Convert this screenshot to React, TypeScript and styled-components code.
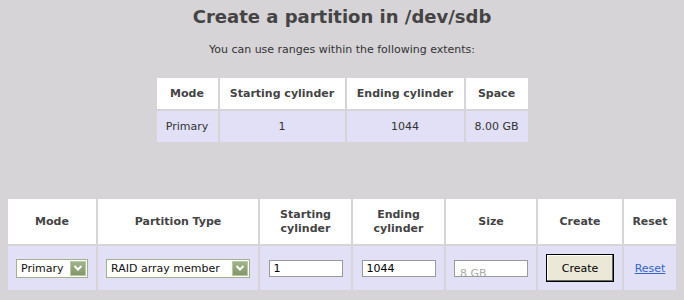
import React from 'react'
import styled, { createGlobalStyle } from 'styled-components'

const GlobalStyle = createGlobalStyle`
  html, body {
    margin: 0;
    padding: 0;
    background: #d6d4d7;
  }
  body {
    font-family: "DejaVu Sans", Verdana, sans-serif;
    font-size: 11px;
    color: #333;
  }
`

const Page = styled.div`
  padding: 0 6px;
`

const Title = styled.h1`
  margin: 0;
  padding-top: 6px;
  text-align: center;
  font-size: 18px;
  font-weight: bold;
  line-height: 22px;
  color: #444;
`

const Intro = styled.p`
  margin: 15px 0 0;
  text-align: center;
  font-size: 11px;
  line-height: 13px;
  color: #333;
`

const Table = styled.table<{ $full?: boolean }>`
  border-collapse: separate;
  border-spacing: 2px;
  margin: ${({ $full }) => ($full ? '53px 0 0' : '20px auto 0')};
  width: ${({ $full }) => ($full ? '100%' : 'auto')};
  table-layout: ${({ $full }) => ($full ? 'fixed' : 'auto')};
`

const Th = styled.th<{ $w: number; $h?: number }>`
  width: ${({ $w }) => $w}px;
  height: ${({ $h }) => $h || 31}px;
  padding: 0;
  background: #fff;
  color: #444;
  font-weight: bold;
  font-size: 11px;
  line-height: 14px;
  text-align: center;
  vertical-align: middle;
`

const Td = styled.td<{ $h?: number }>`
  height: ${({ $h }) => $h || 31}px;
  padding: 0;
  background: #e1e0f6;
  color: #333;
  text-align: center;
  vertical-align: middle;
`

const SelectWrap = styled.span<{ $w: number }>`
  display: inline-flex;
  align-items: center;
  box-sizing: border-box;
  width: ${({ $w }) => $w}px;
  height: 19px;
  border: 1px solid #a3b28d;
  background: #fff;
  padding: 0 1px 0 4px;
  vertical-align: middle;
`

const NativeSelect = styled.select`
  flex: 1;
  min-width: 0;
  appearance: none;
  border: none;
  outline: none;
  background: transparent;
  padding: 0;
  margin: 0;
  font-family: "DejaVu Sans", Verdana, sans-serif;
  font-size: 11px;
  color: #111;
`

const ArrowButton = styled.span`
  display: flex;
  align-items: center;
  justify-content: center;
  box-sizing: border-box;
  width: 16px;
  height: 15px;
  background: linear-gradient(#a1b389, #83976a);
  border: 1px solid #b9c7a6;
`

const TextInput = styled.input`
  box-sizing: border-box;
  width: 74px;
  height: 17px;
  border: 1px solid #999;
  padding: 0 4px;
  font-family: "DejaVu Sans", Verdana, sans-serif;
  font-size: 11px;
  color: #000;
  background: #fff;
  vertical-align: middle;
  outline: none;
`

// the size field shows its value pushed low and cut by its own frame
const DisabledField = styled.span`
  display: inline-block;
  box-sizing: border-box;
  width: 74px;
  height: 17px;
  border: 1px solid #999;
  padding: 6px 0 0 5px;
  overflow: hidden;
  text-align: left;
  line-height: 13px;
  color: #aaa;
  background: #fff;
  vertical-align: middle;
`

const Button = styled.button`
  box-sizing: border-box;
  width: 68px;
  height: 28px;
  border: 1px solid #000;
  box-shadow: inset -1px -1px 0 #666, inset 1px 1px 0 #fff;
  background: #ebe8d8;
  font-family: "DejaVu Sans", Verdana, sans-serif;
  font-size: 11px;
  color: #000;
  padding: 0;
  vertical-align: middle;
`

const ResetLink = styled.a`
  color: #3366cc;
  text-decoration: underline;
  font-size: 11px;
`

function Chevron() {
  return (
    <svg width="10" height="8" viewBox="0 0 10 8">
      <path d="M1.5 2 L5 5.5 L8.5 2" fill="none" stroke="#fff" strokeWidth="2" />
    </svg>
  )
}

function Select({ width, value }: { width: number; value: string }) {
  return (
    <SelectWrap $w={width}>
      <NativeSelect defaultValue={value}>
        <option>{value}</option>
      </NativeSelect>
      <ArrowButton>
        <Chevron />
      </ArrowButton>
    </SelectWrap>
  )
}

export default function App() {
  return (
    <Page>
      <GlobalStyle />
      <Title>Create a partition in /dev/sdb</Title>
      <Intro>You can use ranges within the following extents:</Intro>

      <Table>
        <thead>
          <tr>
            <Th $w={61}>Mode</Th>
            <Th $w={125}>Starting cylinder</Th>
            <Th $w={117}>Ending cylinder</Th>
            <Th $w={62}>Space</Th>
          </tr>
        </thead>
        <tbody>
          <tr>
            <Td>Primary</Td>
            <Td>1</Td>
            <Td>1044</Td>
            <Td>8.00 GB</Td>
          </tr>
        </tbody>
      </Table>

      <Table $full>
        <thead>
          <tr>
            <Th $w={88} $h={45}>Mode</Th>
            <Th $w={160} $h={45}>Partition Type</Th>
            <Th $w={91} $h={45}>Starting cylinder</Th>
            <Th $w={91} $h={45}>Ending cylinder</Th>
            <Th $w={90} $h={45}>Size</Th>
            <Th $w={84} $h={45}>Create</Th>
            <Th $w={52} $h={45}>Reset</Th>
          </tr>
        </thead>
        <tbody>
          <tr>
            <Td $h={44}><Select width={72} value="Primary" /></Td>
            <Td $h={44}><Select width={144} value="RAID array member" /></Td>
            <Td $h={44}><TextInput defaultValue="1" /></Td>
            <Td $h={44}><TextInput defaultValue="1044" /></Td>
            <Td $h={44}><DisabledField>8 GB</DisabledField></Td>
            <Td $h={44}><Button>Create</Button></Td>
            <Td $h={44}><ResetLink href="#">Reset</ResetLink></Td>
          </tr>
        </tbody>
      </Table>
    </Page>
  )
}
